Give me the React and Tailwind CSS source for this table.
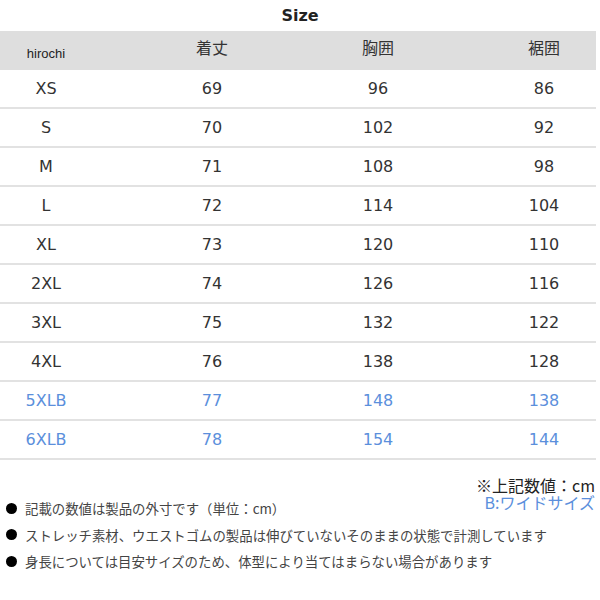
const rows = [
  ["XS", 69, 96, 86],
  ["S", 70, 102, 92],
  ["M", 71, 108, 98],
  ["L", 72, 114, 104],
  ["XL", 73, 120, 110],
  ["2XL", 74, 126, 116],
  ["3XL", 75, 132, 122],
  ["4XL", 76, 138, 128],
  ["5XLB", 77, 148, 138, true],
  ["6XLB", 78, 154, 144, true],
];

const notes = [
  "記載の数値は製品の外寸です（単位：cm）",
  "ストレッチ素材、ウエストゴムの製品は伸びていないそのままの状態で計測しています",
  "身長については目安サイズのため、体型により当てはまらない場合があります",
];

function App() {
  return (
    <div className="w-[600px] h-[600px] bg-white overflow-hidden font-['DejaVu_Sans','Noto_Sans_CJK_JP',sans-serif]">
      <div className="h-[31px] flex items-center justify-center text-[16px] font-bold text-[#222] pt-[1px]">
        Size
      </div>
      <div className="w-[596px]">
        <div className="h-[39px] bg-[#dedede] grid grid-cols-[repeat(4,80px)] gap-x-[86px] pl-[6px] items-center text-[#333]">
          <div className="text-center text-[13px] font-['Liberation_Sans',sans-serif] pt-[7px] text-[#222]">hirochi</div>
          <div className="text-center text-[16px] font-['Noto_Sans_CJK_JP',sans-serif] pb-[7px]">着丈</div>
          <div className="text-center text-[16px] font-['Noto_Sans_CJK_JP',sans-serif] pb-[7px]">胸囲</div>
          <div className="text-center text-[16px] font-['Noto_Sans_CJK_JP',sans-serif] pb-[7px]">裾囲</div>
        </div>
        {rows.map((r) => (
          <div
            key={r[0]}
            className={
              "h-[39px] border-b-2 border-[#e2e2e2] grid grid-cols-[repeat(4,80px)] gap-x-[86px] pl-[6px] items-center text-[16px] " +
              (r[4] ? "text-[#5b8fdc]" : "text-[#333]")
            }
          >
            <div className="text-center">{r[0]}</div>
            <div className="text-center">{r[1]}</div>
            <div className="text-center">{r[2]}</div>
            <div className="text-center">{r[3]}</div>
          </div>
        ))}
      </div>
      <div className="flex flex-col items-end pr-[5px] mt-[17px] font-['Noto_Sans_CJK_JP',sans-serif] text-[16px] leading-[17px]">
        <div className="text-[#222]">※上記数値：cm</div>
        <div className="text-[#5b8fdc]">B:ワイドサイズ</div>
      </div>
      <div className="flex flex-col gap-[10.5px] pl-[6px] mt-[-11px] font-['Noto_Sans_CJK_JP',sans-serif] text-[13.4px] leading-[16px] text-[#444]">
        {notes.map((n) => (
          <div key={n} className="flex items-center gap-[8px]">
            <span className="w-[11px] h-[11px] rounded-full bg-black shrink-0" />
            <span>{n}</span>
          </div>
        ))}
      </div>
    </div>
  );
}

export default App;
